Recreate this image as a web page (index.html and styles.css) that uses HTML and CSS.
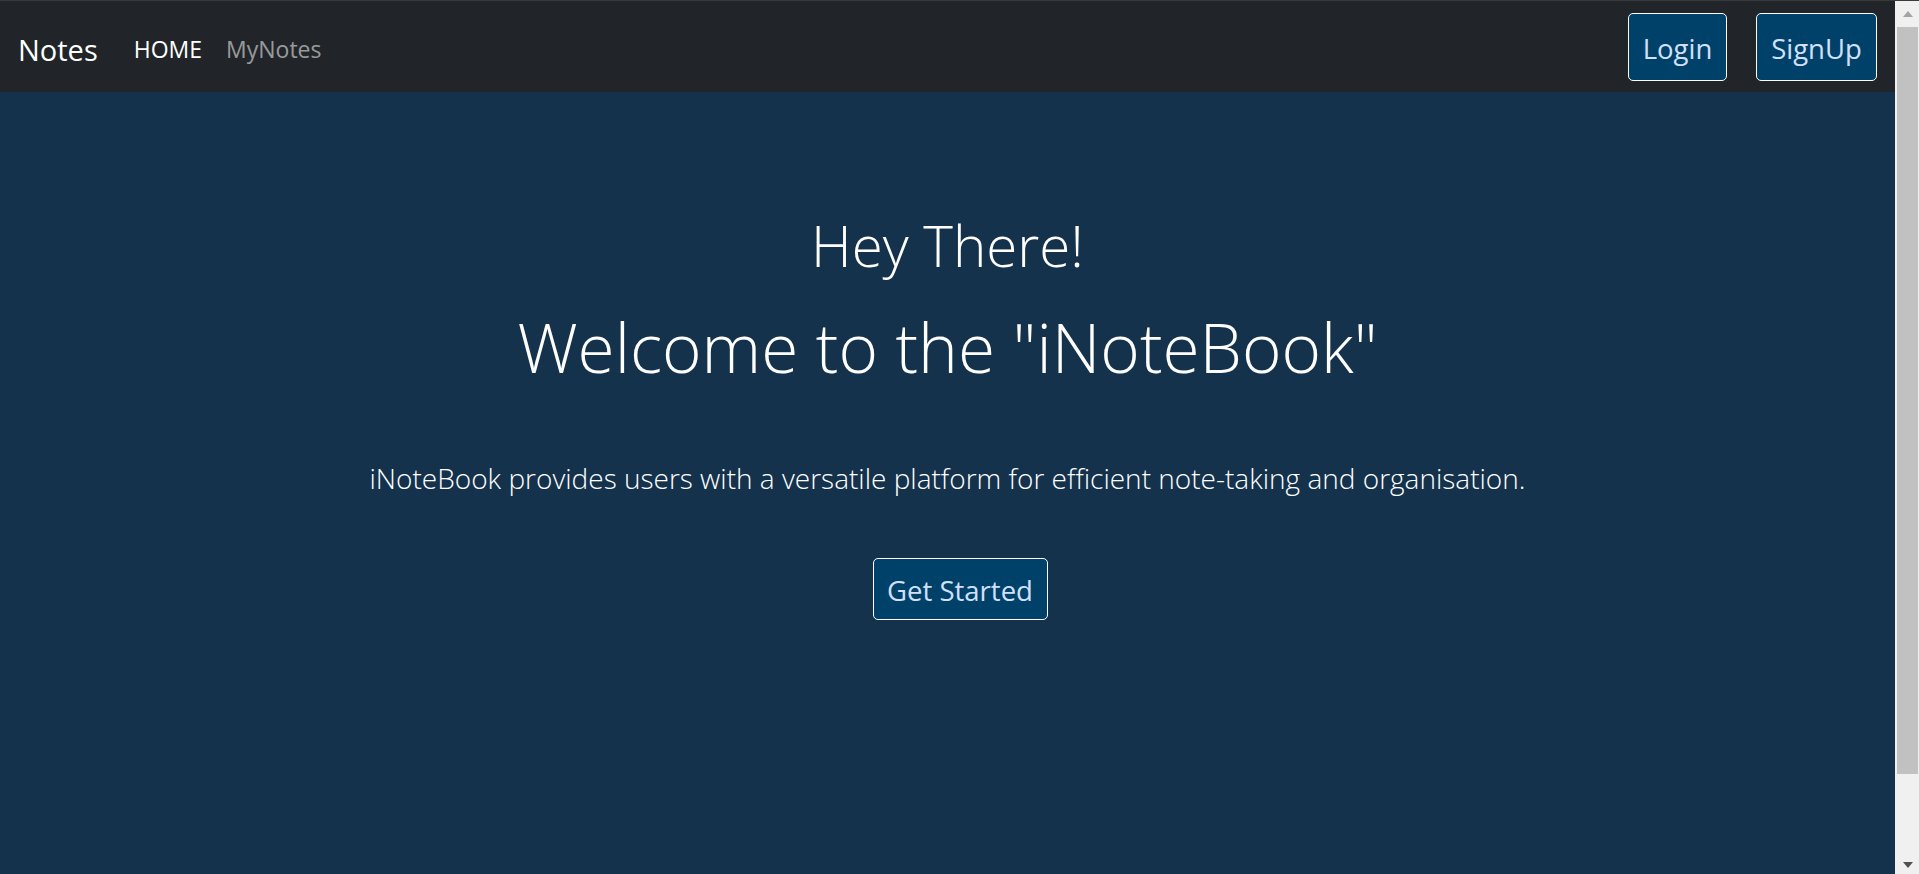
FILE: index.html
```html
<!DOCTYPE html>
<html lang="en">
<head>
<meta charset="utf-8">
<title>iNoteBook</title>
<link rel="stylesheet" href="styles.css">
</head>
<body>
<div class="page">
  <nav class="navbar">
    <a class="brand" href="#">Notes</a>
    <ul class="nav-links">
      <li><a class="nav-link active" href="#">HOME</a></li>
      <li><a class="nav-link" href="#">MyNotes</a></li>
    </ul>
    <div class="nav-actions">
      <a class="btn btn-login" href="#">Login</a>
      <a class="btn btn-signup" href="#">SignUp</a>
    </div>
  </nav>
  <main class="hero">
    <h1 class="hero-greet">Hey There!</h1>
    <h2 class="hero-title">Welcome to the "iNoteBook"</h2>
    <p class="hero-lead">iNoteBook provides users with a versatile platform for efficient note-taking and organisation.</p>
    <a class="btn btn-start" href="#">Get Started</a>
  </main>
</div>
<div class="scrollbar" aria-hidden="true">
  <div class="sb-btn sb-up"><span class="arrow-up"></span></div>
  <div class="sb-track"><div class="sb-thumb"></div></div>
  <div class="sb-btn sb-down"><span class="arrow-down"></span></div>
</div>
</body>
</html>
```

FILE: styles.css
```css
html, body {
  margin: 0;
  padding: 0;
  overflow: hidden;
}
body {
  display: flex;
  height: 874px;
  box-sizing: border-box;
  border-top: 1px solid #3a3a3a;
  font-family: "Open Sans", "Noto Sans", "Liberation Sans", sans-serif;
  background: #14324c;
  color: #ffffff;
}
a { text-decoration: none; }

.page {
  flex: 1;
  display: flex;
  flex-direction: column;
  min-width: 0;
}

/* fake classic scrollbar */
.scrollbar {
  width: 24px;
  flex: none;
  display: flex;
  flex-direction: column;
  background: #f0f0f0;
}
.sb-btn {
  height: 25px;
  flex: none;
  display: flex;
  justify-content: center;
  box-sizing: border-box;
  padding-left: 1px;
}
.sb-up { padding-top: 10px; }
.sb-down { padding-top: 13px; }
.arrow-up {
  width: 0;
  height: 0;
  border-left: 5.5px solid transparent;
  border-right: 5.5px solid transparent;
  border-bottom: 6px solid #a3a3a3;
}
.arrow-down {
  width: 0;
  height: 0;
  border-left: 5.5px solid transparent;
  border-right: 5.5px solid transparent;
  border-top: 6px solid #505050;
}
.sb-track {
  flex: 1;
  padding: 1px 1px 0 2px;
}
.sb-thumb {
  height: 747px;
  background: #c1c1c1;
}

.navbar {
  display: flex;
  align-items: center;
  height: 91px;
  flex: none;
  padding: 0 18px;
  background: #212529;
}
.brand {
  color: #ffffff;
  font-size: 29px;
  margin-right: 24px;
  padding-top: 5px;
}
.nav-links {
  display: flex;
  list-style: none;
  margin: 0;
  padding: 0;
  flex: 1;
}
.nav-link {
  display: block;
  padding: 5px 12px 0;
  font-size: 23px;
  color: rgba(255, 255, 255, 0.55);
}
.nav-link.active { color: #ffffff; }

.nav-actions {
  display: flex;
  gap: 29px;
}
.btn {
  display: inline-flex;
  align-items: center;
  justify-content: center;
  box-sizing: border-box;
  padding-top: 4px;
  background: #00416a;
  color: #d2e0fc;
  border: 1px solid #ffffff;
  border-radius: 5px;
  font-size: 27.5px;
}
.btn-login { width: 99px; height: 68px; }
.btn-signup { width: 121px; height: 68px; }

.hero {
  flex: 1;
  display: flex;
  flex-direction: column;
  align-items: center;
  text-align: center;
  padding-top: 118px;
}
.hero-greet {
  margin: 0;
  font-size: 56.5px;
  font-weight: 300;
  line-height: 72px;
}
.hero-title {
  margin: 22px 0 0;
  font-size: 67.5px;
  font-weight: 300;
  line-height: 86px;
}
.hero-lead {
  margin: 66px 0 0;
  font-size: 28px;
  font-weight: 300;
  line-height: 45px;
}
.btn-start {
  margin: 57px 0 0 25px;
  width: 175px;
  height: 62px;
  padding-top: 2px;
}
```
